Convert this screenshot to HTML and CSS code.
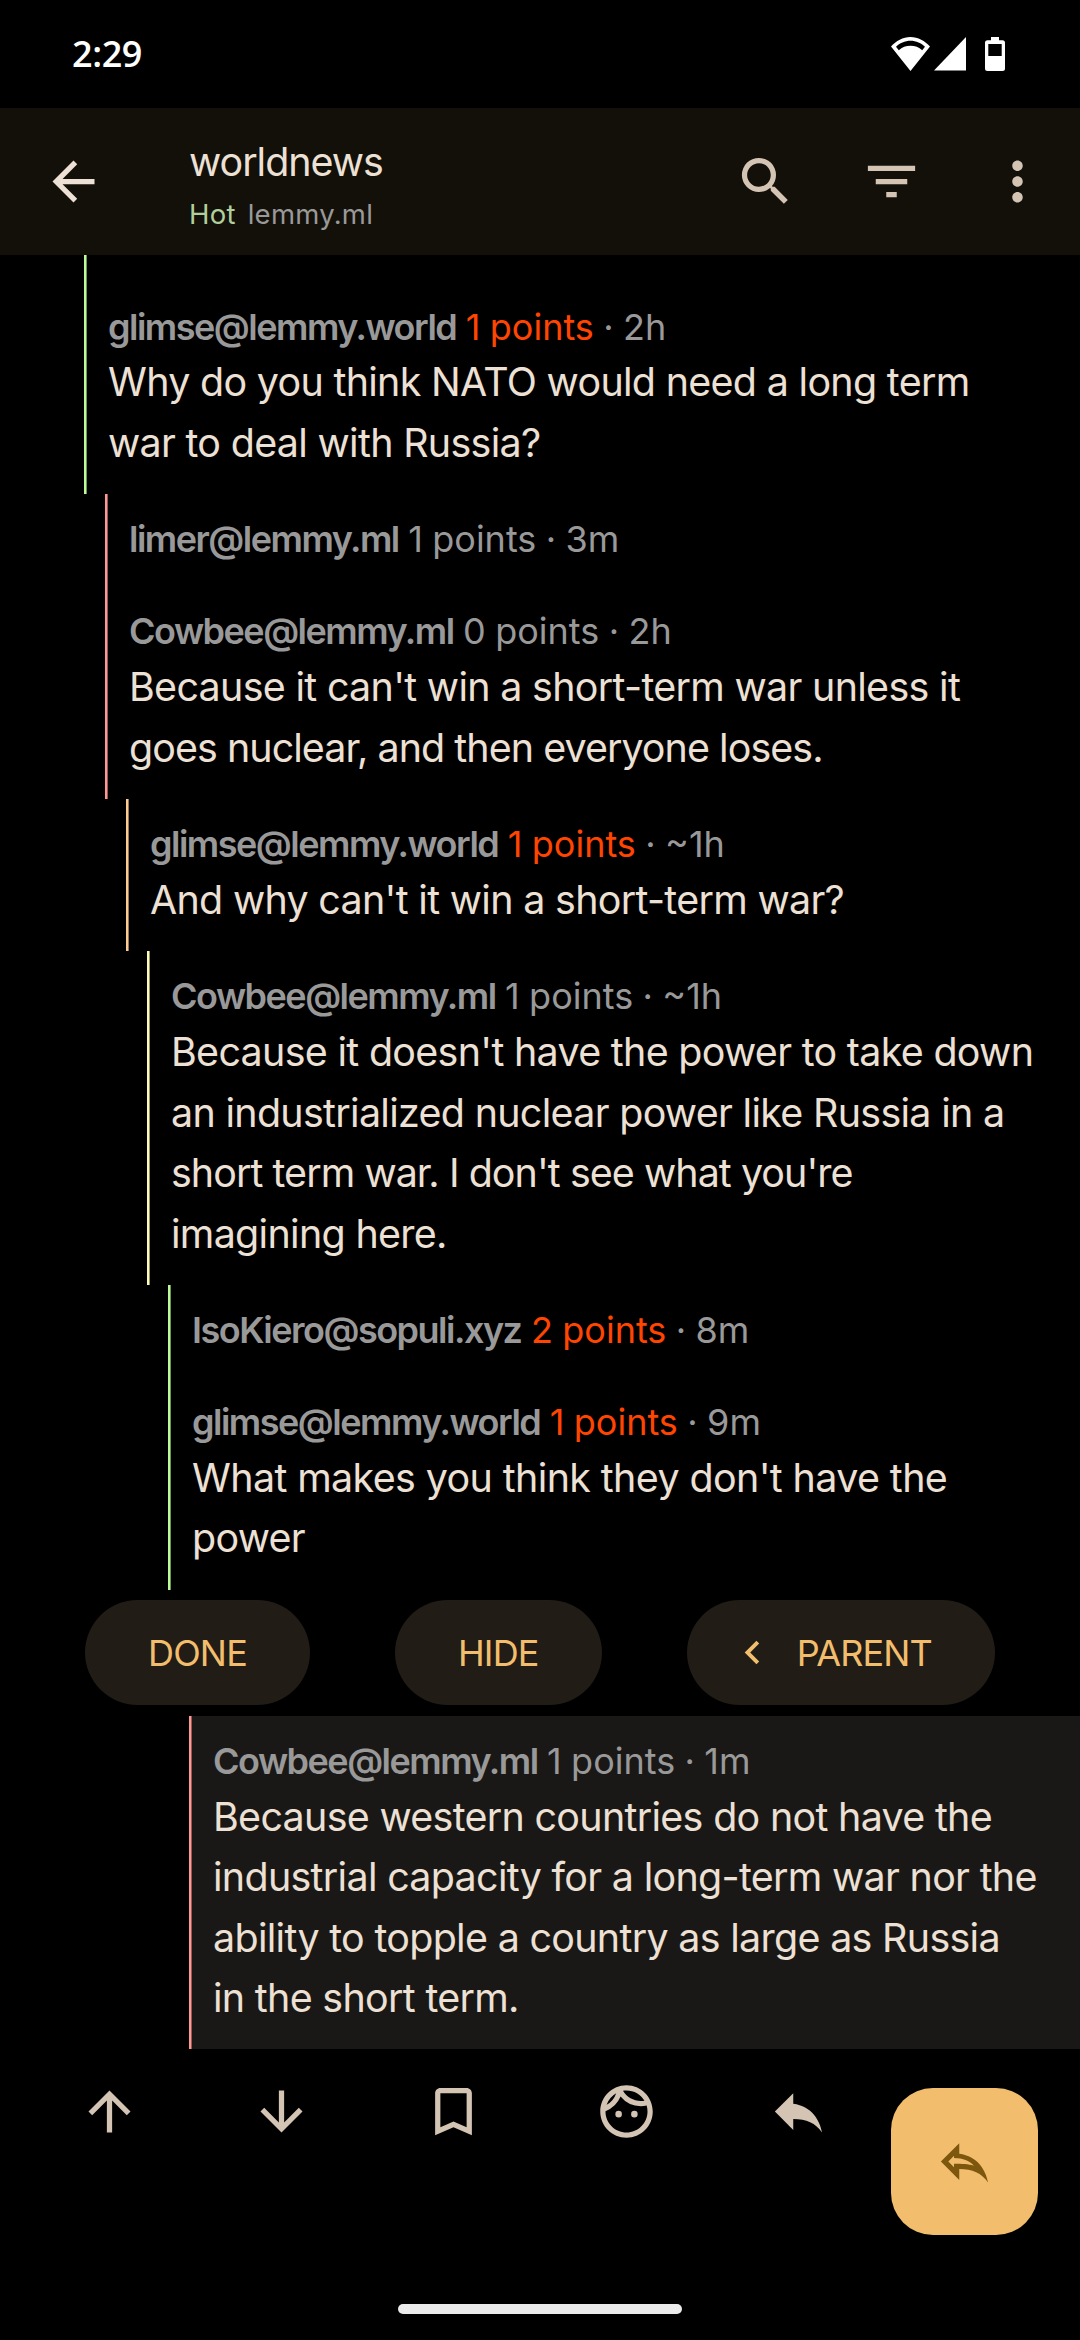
FILE: index.html
```html
<!DOCTYPE html>
<html lang="en">
<head>
<meta charset="utf-8">
<title>worldnews</title>
<link rel="stylesheet" href="styles.css">
</head>
<body>
<div class="screen">
  <div class="status">
    <span class="clock">2:29</span>
    <div class="status-icons">
      <svg class="wifi" viewBox="0 0 39 34"><path fill-rule="evenodd" d="M19.500 34L0 9.500C5 4 12 0 19.500 0S34 4 39 9.500zM19.500 3.800C14 3.800 8.500 6.300 5 9.800L7.800 13.200C11 10.300 15 8.800 19.500 8.800S28 10.300 31.200 13.200L34 9.800C30.500 6.300 25 3.800 19.500 3.800z"/></svg>
      <svg class="signal" viewBox="0 0 32 34"><path d="M32 0V33.500H0z"/></svg>
      <svg class="battery" viewBox="0 0 20 34"><path fill-rule="evenodd" d="M6 0h8v3.300h3.500a2.500 2.500 0 0 1 2.500 2.500v25.700a2.500 2.500 0 0 1-2.500 2.500h-15a2.500 2.500 0 0 1-2.500-2.500V5.800a2.500 2.500 0 0 1 2.500-2.500H6zM3.300 7v12h13.400V7z"/></svg>
    </div>
  </div>
  <header class="appbar">
    <svg class="icon back" viewBox="0 0 24 24"><path d="M20 11H7.830l5.590-5.590L12 4l-8 8 8 8 1.410-1.410L7.830 13H20z"/></svg>
    <div class="titles">
      <div class="title">worldnews</div>
      <div class="subtitle"><span class="sort">Hot</span><span>lemmy.ml</span></div>
    </div>
    <div class="actions">
      <svg class="icon" viewBox="0 0 24 24"><path d="M15.500 14h-.790l-.280-.270A6.471 6.471 0 0 0 16 9.500 6.500 6.500 0 1 0 9.500 16c1.610 0 3.090-.590 4.230-1.570l.270.280v.790l5 4.990L20.490 19zm-6 0C7.010 14 5 11.990 5 9.500S7.010 5 9.500 5 14 7.010 14 9.500 11.990 14 9.500 14z"/></svg>
      <svg class="icon" viewBox="0 0 24 24"><path d="M10 18h4v-2h-4zM3 6v2h18V6zm3 7h12v-2H6z"/></svg>
      <svg class="icon" viewBox="0 0 24 24"><path d="M12 8c1.100 0 2-.900 2-2s-.900-2-2-2-2 .900-2 2 .900 2 2 2zm0 2c-1.100 0-2 .900-2 2s.900 2 2 2 2-.900 2-2-.900-2-2-2zm0 6c-1.100 0-2 .900-2 2s.900 2 2 2 2-.900 2-2-.900-2-2-2z"/></svg>
    </div>
  </header>
  <main class="thread">
    <div class="tail d1 green"></div>
    <article class="comment first d1 green">
      <div class="meta"><b>glimse@lemmy.world</b> <em>1 points</em> · 2h</div>
      <p>Why do you think NATO would need a long term<br>war to deal with Russia?</p>
    </article>
    <article class="comment d2 red">
      <div class="meta"><b>limer@lemmy.ml</b> 1 points · 3m</div>
    </article>
    <article class="comment joined d2 red">
      <div class="meta"><b>Cowbee@lemmy.ml</b> 0 points · 2h</div>
      <p>Because it can't win a short-term war unless it<br><span class="tight">goes nuclear, and then everyone loses.</span></p>
    </article>
    <article class="comment d3 orange">
      <div class="meta"><b>glimse@lemmy.world</b> <em>1 points</em> · ~1h</div>
      <p>And why can't it win a short-term war?</p>
    </article>
    <article class="comment d4 yellow">
      <div class="meta"><b>Cowbee@lemmy.ml</b> 1 points · ~1h</div>
      <p>Because it doesn't have the power to take down<br>an industrialized nuclear power like Russia in a<br><span class="tight">short term war. I don't see what you're</span><br>imagining here.</p>
    </article>
    <article class="comment d5 green">
      <div class="meta"><b>IsoKiero@sopuli.xyz</b> <em>2 points</em> · 8m</div>
    </article>
    <article class="comment joined d5 green">
      <div class="meta"><b>glimse@lemmy.world</b> <em>1 points</em> · 9m</div>
      <p><span class="loose">What makes you think they don't have the</span><br>power</p>
    </article>
    <div class="buttons">
      <button>DONE</button>
      <button>HIDE</button>
      <button class="with-icon"><svg viewBox="0 0 24 24"><path d="M15.410 7.410L14 6l-6 6 6 6 1.410-1.410L10.830 12z"/></svg>PARENT</button>
    </div>
    <article class="comment d6 red selected">
      <div class="meta"><b>Cowbee@lemmy.ml</b> 1 points · 1m</div>
      <p>Because western countries do not have the<br>industrial capacity for a long-term war nor the<br>ability to topple a country as large as Russia<br>in the short term.</p>
    </article>
  </main>
  <div class="tools">
    <svg class="icon" viewBox="0 0 24 24"><path d="M4 12l1.410 1.410L11 7.830V20h2V7.830l5.580 5.590L20 12l-8-8z"/></svg>
    <svg class="icon" viewBox="0 0 24 24"><path d="M20 12l-1.410-1.410L13 16.170V4h-2v12.170l-5.580-5.590L4 12l8 8z"/></svg>
    <svg class="icon" viewBox="0 0 24 24"><path d="M17 3H7c-1.100 0-2 .900-2 2v16l7-3 7 3V5c0-1.100-.900-2-2-2zm0 15l-5-2.180L7 18V5h10z"/></svg>
    <svg class="icon" viewBox="0 0 24 24"><path d="M10.250 13a1.250 1.250 0 1 1-2.500 0 1.250 1.250 0 0 1 2.500 0zM15 11.750a1.250 1.250 0 1 0 0 2.500 1.250 1.250 0 0 0 0-2.500zM22 12c0 5.520-4.480 10-10 10S2 17.520 2 12 6.480 2 12 2s10 4.480 10 10zM10.660 4.120C12.060 6.440 14.600 8 17.500 8c.460 0 .910-.050 1.340-.120C17.440 5.560 14.900 4 12 4c-.460 0-.910.050-1.340.120zM4.420 9.470a8.046 8.046 0 0 0 3.660-4.440 8.046 8.046 0 0 0-3.660 4.440zM20 12c0-.780-.120-1.530-.330-2.240-.700.150-1.420.240-2.170.240a10 10 0 0 1-7.760-3.690A10.016 10.016 0 0 1 4 11.860c.010.040 0 .090 0 .140 0 4.410 3.590 8 8 8s8-3.590 8-8z"/></svg>
    <svg class="icon" viewBox="0 0 24 24"><path d="M10 9V5l-7 7 7 7v-4.100c5 0 8.500 1.600 11 5.100-1-5-4-10-11-11z"/></svg>
  </div>
  <div class="fab"><svg class="icon" viewBox="0 0 24 24"><path fill-rule="evenodd" d="M10 9V5l-7 7 7 7v-4.100c5 0 8.500 1.600 11 5.100-1-5-4-10-11-11zM5.830 12L8 9.830V10.700c3.500.1 5.700 1 7.600 2.900-2.200-.6-4.400-.7-7.600-.7v1.270z"/></svg></div>
  <div class="navpill"></div>
</div>
</body>
</html>
```
FILE: styles.css
```css
* { box-sizing: border-box; }
body { margin: 0; background: #000; font-family: Inter, Roboto, sans-serif; }
.screen { position: relative; width: 1080px; height: 2340px; overflow: hidden; background: #000; display: flex; flex-direction: column; }
svg { display: block; fill: currentColor; flex: none; }
.icon { width: 63px; height: 63px; color: #d3c4b4; }

.status { height: 108px; padding: 0 75px 0 72px; display: flex; align-items: center; justify-content: space-between; color: #fff; }
.clock { font: 600 36px/44px "Open Sans", sans-serif; letter-spacing: -.4px; }
.status-icons { display: flex; }
.wifi { width: 39px; height: 34px; }
.signal { width: 32px; height: 34px; margin-left: 4px; }
.battery { width: 20px; height: 34px; margin-left: 19px; }

.appbar { height: 147px; padding: 0 31.500px 0 42px; display: flex; align-items: center; background: #13100a; }
.back { color: #ede0d4; }
.titles { margin-left: 84px; padding-top: 9px; }
.title { font-size: 39.400px; line-height: 50px; color: #ede0d4; letter-spacing: -1px; position: relative; top: 1px; }
.subtitle { display: flex; gap: 12px; font-size: 27.500px; line-height: 44px; color: #999; letter-spacing: .250px; margin-top: 6px; }
.sort { color: #b1cf9c; }
.actions { margin-left: auto; display: flex; gap: 63px; }

.thread { display: flex; flex-direction: column; }
.tail { height: 26.400px; }
.comment { padding: 21px 0; }
.tail, .comment { border-left: 2px solid var(--rail); box-shadow: inset 1px 0 var(--rail-edge); padding-left: 22px; }
.d1 { margin-left: 84px; }
.d2 { margin-left: 105px; }
.d3 { margin-left: 126px; }
.d4 { margin-left: 147px; }
.d5 { margin-left: 168px; }
.d6 { margin-left: 189px; }
.green { --rail: #bcfc98; --rail-edge: #6f9559; }
.red { --rail: #ff9891; --rail-edge: #965955; }
.orange { --rail: #ffcb94; --rail-edge: #967757; }
.yellow { --rail: #fffcb4; --rail-edge: #96946a; }
.selected { background: #1a1816; }
.meta { height: 50px; line-height: 48px; font-size: 36px; color: #999; white-space: nowrap; word-spacing: -.700px; }
.first .meta { line-height: 51px; }
.meta b { font-weight: 600; letter-spacing: -1.500px; }
.meta em { font-style: normal; color: #ff4500; }
.comment p { margin: 0; font-size: 39.400px; line-height: 60.400px; letter-spacing: -.680px; color: #ede0d4; white-space: nowrap; }
.tight { letter-spacing: -.930px; }
.loose { letter-spacing: -.600px; }

.buttons { height: 126px; display: flex; align-items: center; justify-content: space-evenly; }
button { height: 105px; padding: 0 63px; border: 0; border-radius: 53px; background: #211c15; color: #f2be6e; font: 400 36px Inter, sans-serif; letter-spacing: -.850px; display: flex; align-items: center; }
button svg { width: 47px; height: 47px; margin-right: 21px; }
button.with-icon { padding-left: 42px; }

.tools { padding: 31px 23px 0; display: grid; grid-template-columns: repeat(6, 1fr); justify-items: center; }
.fab { position: absolute; left: 891px; top: 2088px; width: 147px; height: 147px; border-radius: 42px; background: #f2be6e; display: flex; align-items: center; justify-content: center; }
.fab .icon { color: #7d570d; }
.navpill { position: absolute; left: 398px; top: 2304px; width: 284px; height: 10px; border-radius: 5px; background: #ebebeb; }
```
